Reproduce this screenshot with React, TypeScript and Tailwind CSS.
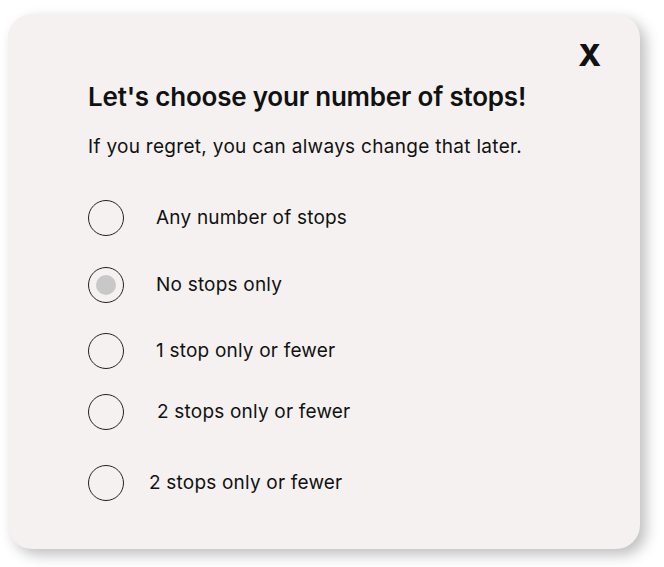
import { useState } from "react";

export default function App() {
  const [selected, setSelected] = useState(1);

  const options = [
    { label: "Any number of stops", gap: "pl-[32px]", h: "h-[67px]" },
    { label: "No stops only", gap: "pl-[32px]", h: "h-[66px]" },
    { label: "1 stop only or fewer", gap: "pl-[32px]", h: "h-[61px]" },
    { label: "2 stops only or fewer", gap: "pl-[33px]", h: "h-[71px]" },
    { label: "2 stops only or fewer", gap: "pl-[25px]", h: "h-[40px]" },
  ];

  return (
    <div className="min-h-screen bg-white pt-[14px] pl-[8px] font-['Inter',sans-serif]">
      <div className="w-[632px] h-[535px] rounded-[24px] bg-[#f4f1f0] shadow-[6px_6px_14px_rgba(0,0,0,0.25)] relative">
        {/* Close */}
        <button className="absolute top-[26px] right-[39px] text-[30px] font-extrabold text-[#111] leading-none">
          X
        </button>

        <div className="pl-[80px] pt-[67px]">
          <h2 className="text-[26px] font-semibold text-[#111] tracking-[-0.2px] leading-[32px]">
            Let's choose your number of stops!
          </h2>
          <p className="mt-[22px] text-[19px] text-[#111] tracking-[0.3px] leading-[24px]">
            If you regret, you can always change that later.
          </p>

          <ul className="mt-[41px]">
            {options.map((opt, i) => (
              <li key={i} className={`flex items-start ${opt.h}`}>
                <button
                  onClick={() => setSelected(i)}
                  className="flex items-center cursor-pointer"
                >
                  <span className="w-[36px] h-[36px] rounded-full border border-[#222] flex items-center justify-center">
                    {selected === i && (
                      <span className="w-[20px] h-[20px] rounded-full bg-[#c8c8c8]"></span>
                    )}
                  </span>
                  <span className={`${opt.gap} text-[19px] tracking-[0.2px] text-[#111]`}>
                    {opt.label}
                  </span>
                </button>
              </li>
            ))}
          </ul>
        </div>
      </div>
    </div>
  );
}
